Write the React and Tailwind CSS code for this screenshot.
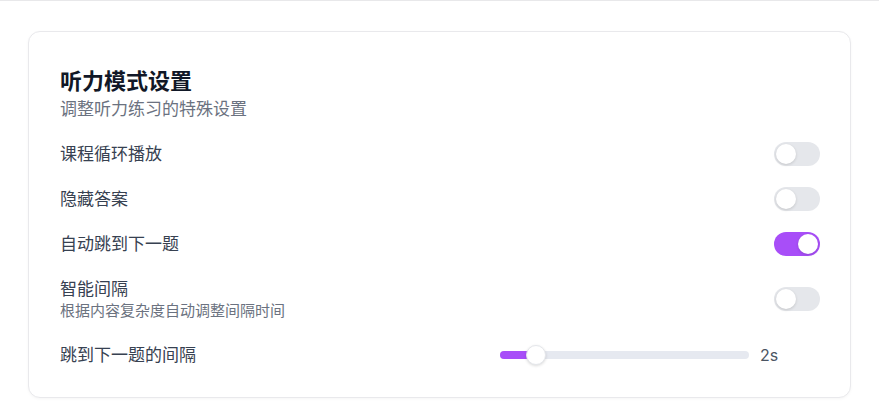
import { useState } from "react";

const font = { fontFamily: '"Inter", "Noto Sans CJK SC", sans-serif' };

function Toggle({ on, onChange }) {
  return (
    <button
      onClick={onChange}
      className={`relative h-6 w-[46px] shrink-0 rounded-full transition ${
        on ? "bg-[#a84ef8]" : "bg-[#e5e7eb]"
      }`}
    >
      <span
        className={`absolute top-[2px] h-5 w-5 rounded-full bg-white shadow-[0_1px_3px_rgba(0,0,0,0.15)] transition ${
          on ? "left-[24px]" : "left-[2px]"
        }`}
      />
    </button>
  );
}

export default function App() {
  const [settings, setSettings] = useState({
    loop: false,
    hide: false,
    autoNext: true,
    smart: false,
  });
  const [interval, setIntervalValue] = useState(2);

  const flip = (k) => setSettings((s) => ({ ...s, [k]: !s[k] }));
  const pct = (interval / 14) * 100;

  return (
    <div className="min-h-screen bg-white border-t border-[#e8e8ea] pt-[30px] px-7" style={font}>
      <div className="rounded-xl border border-[#e9e9ec] bg-white pl-[31px] pr-[30px] pt-[35px] pb-[29px] shadow-[0_1px_3px_rgba(0,0,0,0.04)]">
        <div className="mb-[23px]">
          <h2 className="text-[22px] font-semibold leading-7 text-[#111827]">听力模式设置</h2>
          <p className="mt-1 text-[17px] leading-5 text-[#6b7280]">调整听力练习的特殊设置</p>
        </div>

        <div className="flex flex-col gap-[21px]">
          <div className="flex items-center justify-between">
            <span className="text-[17px] leading-6 text-[#374151]">课程循环播放</span>
            <Toggle on={settings.loop} onChange={() => flip("loop")} />
          </div>
          <div className="flex items-center justify-between">
            <span className="text-[17px] leading-6 text-[#374151]">隐藏答案</span>
            <Toggle on={settings.hide} onChange={() => flip("hide")} />
          </div>
          <div className="flex items-center justify-between">
            <span className="text-[17px] leading-6 text-[#374151]">自动跳到下一题</span>
            <Toggle on={settings.autoNext} onChange={() => flip("autoNext")} />
          </div>
          <div className="flex items-center justify-between">
            <div className="flex flex-col">
              <span className="text-[17px] leading-6 text-[#374151]">智能间隔</span>
              <span className="text-[15px] leading-5 text-[#6b7280]">根据内容复杂度自动调整间隔时间</span>
            </div>
            <Toggle on={settings.smart} onChange={() => flip("smart")} />
          </div>
          <div className="flex h-[26px] items-center justify-between">
            <span className="text-[17px] leading-6 text-[#374151]">跳到下一题的间隔</span>
            <div className="flex w-[320px] items-center gap-[11px]">
              <div
                className="relative h-2 flex-1 cursor-pointer rounded-full bg-[#e6e9f0]"
                onClick={(e) => {
                  const r = e.currentTarget.getBoundingClientRect();
                  const v = Math.round(((e.clientX - r.left) / r.width) * 14);
                  setIntervalValue(Math.min(14, Math.max(1, v)));
                }}
              >
                <div className="absolute left-0 top-0 h-2 rounded-full bg-[#a84ef8]" style={{ width: `${pct}%` }} />
                <div
                  className="absolute top-1/2 h-5 w-5 -translate-x-1/2 -translate-y-1/2 rounded-full border border-[#e5e7eb] bg-white shadow-[0_1px_3px_rgba(0,0,0,0.15)]"
                  style={{ left: `${pct}%` }}
                />
              </div>
              <span className="w-[60px] text-[16px] text-[#4b5563]">{interval}s</span>
            </div>
          </div>
        </div>
      </div>
    </div>
  );
}
